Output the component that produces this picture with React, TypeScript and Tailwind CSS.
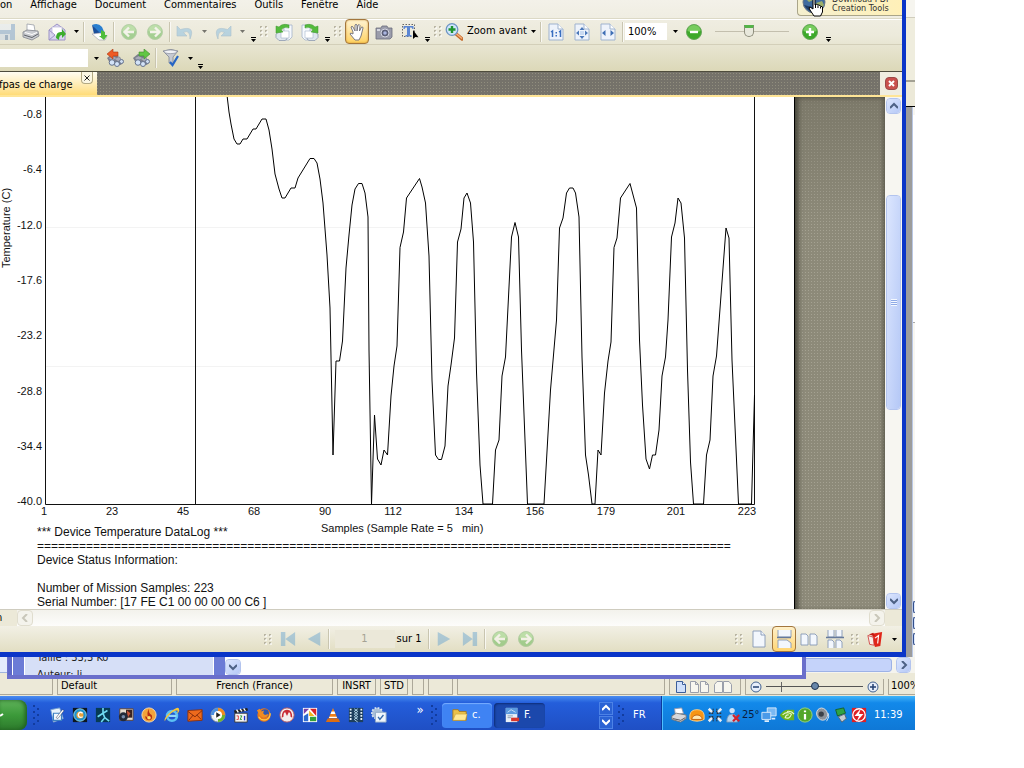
import React from 'react';

type Kids = { children?: React.ReactNode };

const yTicks = ['-0.8', '-6.4', '-12.0', '-17.6', '-23.2', '-28.8', '-34.4', '-40.0'];
const xTicks: [number, string][] = [
    [44, '1'], [112, '23'], [183, '45'], [254, '68'], [325, '90'], [393, '112'],
    [464, '134'], [535, '156'], [606, '179'], [676, '201'], [747, '223'],
];

const curve =
    '227,95 229,112 231,124 234,139 237,144 240,144 243,139 247,139 253,129 256,129 262,119 266,119 269,130 272,149 275,174 279,189 282,198 285,198 291,188 295,188 298,178 310,158.5 314,158.5 317,163 320,179 323,203 327,255 330,308 333,455 336,361 339.5,361 342.5,341 346,268 349,235 352,205 355,189 358.5,183.5 362,183.5 365,193 368,217 369,350 371.5,504 374.5,415 377.5,459 381,465 384,450 387.5,455 391,396 394,366 397,346 400,247.5 403.5,232 406.5,198 419.5,178.5 422,187 425.5,203 429,256 431.5,360 432,380 435.5,455 438.5,459.5 441.5,459.5 445,446 448,386 451,365 454.5,338 457.5,242 461,229 464,198 467,193 470.5,203 473.5,242 476.5,372 480,465 483,504 492.5,504 495.5,450 499,440 502,376 505.5,357 511.5,237 515,222.5 518.5,237 521.5,350 527.5,504 544,504 550.5,390 556.5,320 559.5,228 563,218 566.5,193 569.5,188 573,188 575.5,193 579,217 582,357 585.5,455 588.5,475 592,504 595,504 598,450 601,455 604.5,393 608,361 611,342 614,247.5 617,238 620.5,198 630,183.5 636.5,208 639.5,340 642.5,405 646,459 649.5,469 652.5,455 655.5,455 659,430 662,376 665.5,357 668,320 671.5,237 675,223 678,198 681,203 684.5,238 687.5,370 690.5,462 693.5,504 703.5,504 706.5,455 710,440 713,376 716.5,356 726,228 729,238 732,360 738.5,504 751.5,504 754.5,395';

const Tool: React.FC<Kids & { label: string }> = ({ label, children }) => (
    <button aria-label={label} className="flex w-[26px] shrink-0 items-center justify-center">
        {children}
    </button>
);

const Ico: React.FC<Kids & { size?: number; dim?: boolean }> = ({ size = 18, dim, children }) => (
    <svg width={size} height={size} viewBox="0 0 18 18" fill="none" className={dim ? 'shrink-0 opacity-40' : 'shrink-0'}>
        {children}
    </svg>
);

const Caret = ({ dim = false }) => (
    <svg width="5" height="3" viewBox="0 0 5 3" className={dim ? 'shrink-0 opacity-50' : 'shrink-0'}>
        <path d="M0 0h5L2.5 3z" fill="#000" />
    </svg>
);

const CaretButton = ({ label = 'Options', dim = false }) => (
    <button aria-label={label} className="flex w-3 shrink-0 items-center justify-center">
        <Caret dim={dim} />
    </button>
);

const More = () => (
    <button aria-label="Plus d'outils" className="flex w-2 shrink-0 items-end justify-center pb-0.5">
        <svg width="5" height="5" viewBox="0 0 5 5"><path d="M0 0h5v1H0zM0 2h5L2.5 5z" fill="#000" /></svg>
    </button>
);

const Sep = () => <div className="mx-px h-5 w-0.5 shrink-0 self-center border-l border-[#c9c5b0] bg-white/70" />;

const Grip = () => (
    <div className="flex w-3.5 shrink-0 items-center justify-center">
        <svg width="8" height="11" viewBox="0 0 8 11">
            <path d="M0 0h2v2H0zM5 0h2v2H5zM0 4h2v2H0zM5 4h2v2H5zM0 8h2v2H0zM5 8h2v2H5z" fill="#b9b5a3" />
            <path d="M1 1h2v2H1zM6 1h2v2H6zM1 5h2v2H1zM6 5h2v2H6zM1 9h2v2H1zM6 9h2v2H6z" fill="#fff" opacity=".6" />
        </svg>
    </div>
);

const Ball: React.FC<{ d: string; dim?: boolean }> = ({ d, dim }) => (
    <Ico dim={dim}>
        <circle cx="9" cy="9" r="7.500" fill="#3da92a" stroke="#69a85c" />
        <path d="M2.500 8a6.500 6 0 0 1 13 0q-6.500 3-13 0z" fill="#86d46c" opacity=".8" />
        <path d={d} stroke="#fff" strokeWidth="2.400" />
    </Ico>
);

const leftArrow = 'M14 9H5M9 4.500L4.500 9 9 13.500';
const rightArrow = 'M4 9h9M9 4.500L13.500 9 9 13.500';

const DocIcon: React.FC<Kids> = ({ children }) => (
    <Ico>
        <path d="M2 1h9l5 5v11H2z" fill="#eef3fb" stroke="#9fb3cf" />
        <path d="M11 1v5h5" fill="#fff" stroke="#9fb3cf" />
        {children}
    </Ico>
);

const PageCopy = ({ flip = false }) => (
    <Ico>
        <g transform={flip ? 'matrix(-1 0 0 1 18 0)' : undefined}>
            <path d="M9 2h8v12l-3 3H9z" fill="#f6f9fd" stroke="#a3b3c9" strokeWidth=".8" />
            <path d="M1 11l3-2h8v7l-2 1.500H4l-3-3z" fill="#dfe6ee" stroke="#8e9bb0" strokeWidth=".8" />
            <path d="M6 8h8v7H6z" fill="#fff" stroke="#a3b3c9" strokeWidth=".6" />
            <path d="M14 2Q7 0 4 4L1 3v7l7-1-2-2q3-4 8-2z" fill="#54bb3c" stroke="#3f962e" strokeWidth=".5" />
        </g>
    </Ico>
);

const Binoc = ({ next = false }) => (
    <Ico>
        <path d="M1 9l5-4 8 3 3 5-2 3-5-1-6-1z" fill="#7d7f8c" />
        <path d="M3 9l4-2 3 2-4 3zM9 10l4-2 3 3-4 1z" fill="#a9abb8" />
        <circle cx="6" cy="13.500" r="2.800" fill="#d3e3f8" stroke="#67748d" />
        <circle cx="11" cy="15" r="2.500" fill="#d3e3f8" stroke="#67748d" />
        <circle cx="15.500" cy="12.500" r="2" fill="#cddcf0" stroke="#67748d" />
        {next ? (
            <path d="M7 3h5V0l6 5-6 5V7H7z" fill="#62c644" stroke="#3f8a2b" strokeWidth=".6" />
        ) : (
            <path d="M12 3H7V0L1 5l6 5V7h5z" fill="#ef5a24" stroke="#a83b14" strokeWidth=".6" />
        )}
    </Ico>
);

const Chevron: React.FC<{ d: string; color?: string }> = ({ d, color = '#4d6185' }) => (
    <svg width="8" height="8" viewBox="0 0 8 8" fill="none"><path d={d} stroke={color} strokeWidth="2" /></svg>
);

const UP = 'M0 6l4-4 4 4';
const DOWN = 'M0 2l4 4 4-4';
const RIGHT = 'M2 0l4 4-4 4';
const LEFT = 'M6 0L2 4l4 4';

const scrollBtn =
    'flex shrink-0 items-center justify-center rounded-sm border border-white bg-gradient-to-br from-[#dce6fe] to-[#b5c8f6] outline -outline-offset-1 outline-[#b3c4ee]';
const dimScrollBtn =
    'flex size-4 shrink-0 items-center justify-center rounded-sm border border-[#e0ddce] bg-[#f4f3ec]';
const range = 'cursor-pointer appearance-none bg-transparent';

function MenuBar() {
    return (
        <div className="flex h-[18px] items-end overflow-hidden">
            <nav className="flex gap-[18px] pb-1.5 leading-[14px] text-black" aria-label="Menu">
                {['on', 'Affichage', 'Document', 'Commentaires', 'Outils', 'Fenêtre', 'Aide'].map((m) => (
                    <button key={m}>{m}</button>
                ))}
            </nav>
            <button className="relative mb-0.5 ml-auto flex w-[105px] shrink-0 items-end rounded-bl border-b border-l border-[#aaa589] bg-gradient-to-r from-[#f5f0cf] to-[#fff0b8] pb-px pl-1 text-left text-[9px] leading-[9px] text-[#333]">
                <svg width="24" height="24" viewBox="0 0 24 24">
                    <circle cx="12" cy="12" r="11" fill="#3f6b9e" stroke="#6b7787" />
                    <path d="M3 8q4-6 9-5l1 6-6 3zM14 13l6-2 2 4-5 6z" fill="#9db06a" />
                    <path d="M2 15q4 7 10 7l-2-5z" fill="#1f3c66" />
                </svg>
                <span className="ml-1.5 whitespace-nowrap pb-px">Download PDF<br />Creation Tools</span>
                <svg className="absolute bottom-[-2px] left-2.5" width="16" height="20" viewBox="0 0 16 20">
                    <path d="M5 1q1.500-1 2 1v6l1-1 2 1 1 0 1.500 1 2 1v5l-2 4H6l-4-6q-2-3 0-3l3 2z" fill="#fff" stroke="#000" />
                    <path d="M7.500 8v3M10 8.500v2.500M12.500 9.500v2" stroke="#000" />
                </svg>
            </button>
        </div>
    );
}

function MainToolbar() {
    return (
        <div className="flex h-[27px] items-stretch border-y border-t-[#dcd9c6] border-b-[#d3cfb9] shadow-[inset_0_1px_0_#fff]">
            <button aria-label="Enregistrer" className="flex w-[18px] shrink-0 items-center overflow-hidden">
                <svg width="16" height="18" viewBox="0 0 16 18" opacity=".6">
                    <path d="M0 1h15v16H0z" fill="#8faed0" />
                    <path d="M0 1h11v6H0z" fill="#e8eef5" /><path d="M0 11h10v6H0z" fill="#cfdae6" /><path d="M5 12h3v5H5z" fill="#708db0" />
                </svg>
            </button>
            <Tool label="Imprimer">
                <Ico>
                    <path d="M5 1l7 1 1 6-8 2z" fill="#fff" stroke="#9aa0a8" strokeWidth=".8" />
                    <path d="M1 9l4-2 11 1 1 5-7 4-9-3z" fill="#c9cbd0" stroke="#80848b" strokeWidth=".8" />
                    <path d="M2 12l8 2.500 6-3.500" stroke="#5e6269" />
                    <path d="M3 9.500l7 2 5-2" stroke="#fff" />
                </Ico>
            </Tool>
            <Tool label="Envoyer">
                <Ico>
                    <path d="M1 7l8-6 8 6v10H1z" fill="#d9d5ef" stroke="#9b92c6" />
                    <path d="M4 4h10v7l-5 3-5-3z" fill="#fff" stroke="#b9b6da" strokeWidth=".7" />
                    <path d="M1 17l6-5M1 7l6 5" stroke="#9b92c6" />
                    <path d="M8 15q0-7 6-6V6l4 5-4 4v-3q-3 0-3 5z" fill="#3cae2d" />
                </Ico>
            </Tool>
            <CaretButton />
            <Sep />
            <Tool label="Reader">
                <Ico>
                    <path d="M2 2q6-3 10 2l3 7-7-1z" fill="#2a7fd0" />
                    <path d="M2 2l8 8-6 1z" fill="#1c4f9a" />
                    <path d="M2 11l8-1 7 3-2 4H9z" fill="#fff" stroke="#99a" strokeWidth=".6" />
                    <path d="M11 7l4 2v3h2.500L14 17l-5-4h2z" fill="#4fbd3a" />
                </Ico>
            </Tool>
            <Sep />
            <Tool label="Précédent"><Ball d={leftArrow} dim /></Tool>
            <Tool label="Suivant"><Ball d={rightArrow} dim /></Tool>
            <Sep />
            <Tool label="Annuler"><Ico dim><path d="M1 3v10h10L7.500 9.500Q14 6 14 16 20 2 4.500 6.500z" fill="#6bb0e2" stroke="#4f87b8" strokeWidth=".6" /></Ico></Tool>
            <CaretButton dim />
            <Tool label="Rétablir"><Ico dim><path d="M17 3v10H7l3.500-3.500Q4 6 4 16-2 2 13.500 6.500z" fill="#6bb0e2" stroke="#4f87b8" strokeWidth=".6" /></Ico></Tool>
            <CaretButton dim />
            <div className="ml-px flex"><More /></div>
            <Grip />
            <Tool label="Pivoter à gauche"><PageCopy /></Tool>
            <Tool label="Pivoter à droite"><PageCopy flip /></Tool>
            <More />
            <Grip />
            <button aria-label="Main" className="mr-0.5 flex w-6 shrink-0 items-center justify-center rounded-sm border border-[#a3763d] bg-gradient-to-b from-[#fff3d0] to-[#ffd25e] shadow-[inset_0_0_2px_#c78a2b]">
                <Ico>
                    <path d="M5 9L3 4q1-1.500 2 0l2 4V2q1-1.500 2 0v6l1-6q1.500-1 2 .5L11.500 8l2-4q1.500-.5 1.500 1l-2 8-2 4H7l-5-6q0-2 3 0z" fill="#fff" stroke="#6c6c78" strokeWidth=".9" />
                </Ico>
            </button>
            <Tool label="Instantané">
                <Ico>
                    <path d="M1 5l5 0 1-2h5l1 2h4v9l-2 2H1z" fill="#9a9cab" stroke="#6a6d7c" strokeWidth=".8" />
                    <circle cx="10" cy="10" r="4" fill="#5b5f78" stroke="#d4d6e2" /><circle cx="10" cy="10" r="1.800" fill="#aab5e0" />
                    <path d="M2 6h3v2H2z" fill="#d5d7e0" />
                </Ico>
            </Tool>
            <Tool label="Sélection de texte">
                <Ico>
                    <path d="M1.500 1.500h12v12h-12z" stroke="#666" strokeDasharray="1.500 1.500" />
                    <path d="M2.500 3h10v3h-1l-1-1.500H9V12h1.500v1.500h-6V12H6V4.500H4.500l-1 1.500h-1z" fill="#5b86d3" />
                    <path d="M12 7v9l2.300-2 3.200.3z" fill="#000" />
                </Ico>
            </Tool>
            <More />
            <Grip />
            <button className="flex w-[82px] shrink-0 items-center gap-1 whitespace-nowrap">
                <Ico>
                    <path d="M10 10l7 6" stroke="#c56a2b" strokeWidth="3.500" strokeLinecap="round" /><path d="M11 10.500l6 5" stroke="#f7b27c" strokeWidth="1.500" />
                    <circle cx="7" cy="6.500" r="5.800" fill="#cfe6fb" stroke="#6e94c4" strokeWidth="1.300" />
                    <path d="M7 3v7M3.500 6.500h7" stroke="#1f9431" strokeWidth="2.400" />
                </Ico>
                Zoom avant
            </button>
            <CaretButton />
            <Sep />
            <Tool label="Taille réelle"><DocIcon><path d="M4 9l1.500-1v6M12 9l1.500-1v6" stroke="#3a6fc0" strokeWidth="1.500" /><path d="M8.500 9h1.500v1.500H8.500zM8.500 12h1.500v1.500H8.500z" fill="#3a6fc0" /></DocIcon></Tool>
            <Tool label="Page entière"><DocIcon><path d="M9 4l2.500 3h-5zM9 16l2.500-3h-5zM3 10l3-2.500v5zM15 10l-3-2.500v5z" fill="#4c79bb" /><path d="M7 8h4v4H7z" fill="#c9daf2" /></DocIcon></Tool>
            <Tool label="Pleine largeur"><DocIcon><path d="M3 10l3.500-3v6zM15 10l-3.500-3v6z" fill="#3f6fb5" /></DocIcon></Tool>
            <Sep />
            <input aria-label="Zoom" defaultValue="100%" className="my-1 mr-0.5 w-[42px] shrink-0 bg-white pt-px pl-[3px]" />
            <CaretButton />
            <Tool label="Zoom arrière"><Ball d="M5 9h8" /></Tool>
            <input
                type="range"
                aria-label="Niveau de zoom"
                defaultValue={46}
                className={`${range} mx-2 w-[74px] shrink-0 [&::-webkit-slider-runnable-track]:h-px [&::-webkit-slider-runnable-track]:bg-[#c3bfae] [&::-webkit-slider-thumb]:-mt-1.5 [&::-webkit-slider-thumb]:h-3 [&::-webkit-slider-thumb]:w-2.5 [&::-webkit-slider-thumb]:appearance-none [&::-webkit-slider-thumb]:rounded-b-full [&::-webkit-slider-thumb]:border [&::-webkit-slider-thumb]:border-t-[3px] [&::-webkit-slider-thumb]:border-[#8d8d7c] [&::-webkit-slider-thumb]:border-t-[#54b348] [&::-webkit-slider-thumb]:bg-[#e8e8dc]`}
            />
            <Tool label="Zoom avant plus"><Ball d="M5 9h8M9 5v8" /></Tool>
            <div className="ml-px flex"><More /></div>
        </div>
    );
}

function SearchBar() {
    return (
        <div className="flex h-[26px] items-stretch">
            <input aria-label="Rechercher" className="my-1 w-[88px] shrink-0 bg-white" />
            <div className="ml-0.5 flex"><CaretButton /></div>
            <Tool label="Occurrence précédente"><Binoc /></Tool>
            <Tool label="Occurrence suivante"><Binoc next /></Tool>
            <Sep />
            <Tool label="Filtre">
                <Ico>
                    <path d="M1 2q8-3 15 0l-5 6v8l-4-2V8z" fill="#c5c9d2" stroke="#7f8594" strokeWidth=".8" />
                    <ellipse cx="8.500" cy="2.800" rx="6.500" ry="1.800" fill="#f1f2f6" stroke="#7f8594" strokeWidth=".6" />
                    <path d="M8 13l2.500 3L16 7" stroke="#2766c4" strokeWidth="2.200" />
                </Ico>
            </Tool>
            <CaretButton />
            <More />
        </div>
    );
}

function Chart() {
    return (
        <svg viewBox="0 97 794 428" className="block w-full overflow-visible font-['Liberation_Sans',Arial,sans-serif]" fontSize="11" fill="#111" role="img" aria-label="Temperature (C)">
            <path d="M46 227.500h708M46 366.500h708" stroke="#f3f3f3" />
            <path d="M45.500 97v407.500h709V97M195.500 97v407" fill="none" stroke="#111" />
            <polyline points={curve} fill="none" stroke="#000" />
            {yTicks.map((t, i) => (
                <text key={t} x="42" y={118 + Math.round(i * 55.3)} textAnchor="end">{t}</text>
            ))}
            {xTicks.map(([x, t]) => (
                <text key={t} x={x} y="515" textAnchor="middle">{t}</text>
            ))}
            <text x="321" y="532" className="whitespace-pre">{'Samples (Sample Rate = 5   min)'}</text>
            <text transform="translate(10 228) rotate(-90)" textAnchor="middle">Temperature (C)</text>
        </svg>
    );
}

function Viewport() {
    const report = ['*** Device Temperature DataLog ***', '='.repeat(99), 'Device Status Information:', '', 'Number of Mission Samples: 223', 'Serial Number: [17 FE C1 00 00 00 00 C6 ]'];
    return (
        <div className="flex overflow-hidden bg-[#8f8c7b]">
            <main className="min-w-0 flex-1 bg-white">
                <Chart />
                <div className="pl-[37px] font-['Liberation_Sans',Arial,sans-serif] text-[12px] leading-[14px] text-[#111]">
                    {report.map((line, i) => (
                        <p key={i} className="h-3.5 whitespace-nowrap">{line}</p>
                    ))}
                </div>
            </main>
            <div className="w-[91px] shrink-0 border-l border-black bg-[#8d8a79] bg-[linear-gradient(to_bottom,#6b685a80,transparent_25%),radial-gradient(#a5a292_25%,transparent_26%)] bg-[length:100%_100%,3px_3px] shadow-[inset_5px_0_5px_-2px_#45443a,inset_-4px_3px_4px_-2px_#5d5a4d]" />
            <div className="flex w-[17px] shrink-0 flex-col bg-[#f7f6f1] px-px pt-px">
                <button aria-label="Défiler vers le haut" className={`${scrollBtn} h-4`}><Chevron d={UP} /></button>
                <div className="flex-[82]" />
                <div className={`${scrollBtn} flex-[214]`}>
                    <div className="h-[7px] w-1.5 bg-[repeating-linear-gradient(#f4f8ff_0_1px,#8faae6_1px_2px)]" />
                </div>
                <div className="flex-[184]" />
                <button aria-label="Défiler vers le bas" className={`${scrollBtn} h-4`}><Chevron d={DOWN} /></button>
            </div>
        </div>
    );
}

const NavArrow: React.FC<{ d: string }> = ({ d }) => (
    <Ico dim size={16}><path d={d} fill="#4f97cf" /></Ico>
);

const pg = { fill: '#f3f7fd', stroke: '#8797b5', strokeWidth: 0.9 };

function NavBar() {
    return (
        <div className="flex h-[26px] items-stretch bg-gradient-to-b from-[#f2f0e5] to-[#e2dec3]">
            <div className="flex min-w-0 flex-1 justify-end">
                <Grip />
                <Tool label="Première page"><NavArrow d="M1 1h5v16H1zM17 1v16L6 9z" /></Tool>
                <Tool label="Page précédente"><NavArrow d="M16 1v16L2 9z" /></Tool>
                <Sep />
                <input aria-label="Page" defaultValue="1" disabled className="my-1 ml-1 w-[60px] shrink-0 bg-[#ebe8d9] pt-px text-center text-[#a5a294]" />
                <label className="mr-1 ml-0.5 flex w-[26px] shrink-0 items-center whitespace-nowrap pt-px">sur 1</label>
                <Sep />
                <Tool label="Page suivante"><NavArrow d="M2 1v16l14-8z" /></Tool>
                <Tool label="Dernière page"><NavArrow d="M12 1h5v16h-5zM1 1v16l11-8z" /></Tool>
                <Sep />
                <Tool label="Vue précédente"><Ball d={leftArrow} dim /></Tool>
                <Tool label="Vue suivante"><Ball d={rightArrow} dim /></Tool>
            </div>
            <div className="flex flex-[0_0_40.3%] justify-end">
                <Grip />
                <Tool label="Une page"><Ico><path d="M3 1h8l4 4v12H3z" {...pg} /><path d="M11 1v4h4" {...pg} /></Ico></Tool>
                <button aria-label="Continu" className="flex w-6 shrink-0 items-center justify-center rounded-sm border border-[#a3763d] bg-gradient-to-b from-[#fff0c8] to-[#ffd572]">
                    <Ico><path d="M3 0v7h13V0M3 18v-8h9l4 3v5" {...pg} /><path d="M2 7.500h14" stroke="#667a9c" strokeWidth="1.500" /></Ico>
                </button>
                <Tool label="Deux pages"><Ico><path d="M1 4h5l2 2v9H1zM10 4h5l2 2v9h-7z" {...pg} /></Ico></Tool>
                <Tool label="Deux pages continues"><Ico><path d="M2 0v7h6V0M10 0v7h6V0M2 18v-8h4l2 2v6M10 18v-8h4l2 2v6" {...pg} /><path d="M0 7.500h18" stroke="#667a9c" strokeWidth="1.500" /></Ico></Tool>
                <Grip />
                <Tool label="PDF"><Ico size={16}><path d="M6 3l11-2-2 16-6 1-2-5z" fill="#e02619" /><path d="M1 5l6 2 1 9-5-1z" fill="#f6efe9" stroke="#c33" strokeWidth=".9" /><path d="M2 4l5-2 2 4z" fill="#c21a12" /><path d="M9 8l4-3-1 9" stroke="#fff" strokeWidth="1.300" /></Ico></Tool>
                <CaretButton />
                <div className="w-0.5" />
            </div>
        </div>
    );
}

function PdfWindow() {
    return (
        <section className="relative z-10 mr-[9px] overflow-hidden border-r-4 border-b-[5px] border-[#0a35c8] bg-[#ece9d8]">
            <div className="bg-gradient-to-b from-[#f3f1e9] via-[#eceadb] to-[#dcd8b8]">
                <MenuBar />
                <MainToolbar />
                <SearchBar />
            </div>
            <div className="flex h-6 items-stretch border-t border-[#4e4c3c] bg-[#75726a] bg-[radial-gradient(#918e7e_25%,transparent_26%)] bg-[length:3px_3px]">
                <div className="flex w-[97px] items-start bg-gradient-to-b from-[#fffdf2] to-[#ffdc78]">
                    <span className="-ml-px flex-1 whitespace-nowrap leading-[26px]">fpas de charge</span>
                    <button aria-label="Fermer l'onglet" className="mr-1 flex size-3 shrink-0 items-center justify-center rounded-b-sm border border-t-0 border-[#b3a983] bg-[#fbf7e4]">
                        <svg width="6" height="6" viewBox="0 0 6 6"><path d="M.5.5l5 5M5.500.5l-5 5" stroke="#222" /></svg>
                    </button>
                </div>
                <div className="ml-auto flex w-[22px] items-center justify-center bg-[#f0ede0]">
                    <button aria-label="Fermer" className="flex size-[13px] items-center justify-center rounded-sm border border-[#9a4a48] bg-[#c9504d]">
                        <svg width="7" height="7" viewBox="0 0 7 7"><path d="M1 1l5 5M6 1L1 6" stroke="#fff" strokeWidth="2" /></svg>
                    </button>
                </div>
            </div>
            <div className="h-0.5 bg-[#ffe596]" />
            <Viewport />
            <div className="flex h-[17px] items-center border-t border-[#cfccbf] bg-gradient-to-b from-[#f3f2ec] to-[#fdfdfb]">
                <div className="flex w-[17px] items-center self-stretch bg-[#ece9d8]"><span className="-ml-1">n</span></div>
                <button aria-label="Défiler vers la gauche" className={dimScrollBtn}><Chevron d={LEFT} color="#c9c7ba" /></button>
                <div className="flex-1" />
                <button aria-label="Défiler vers la droite" className={dimScrollBtn}><Chevron d={RIGHT} color="#c9c7ba" /></button>
                <div className="w-[17px] self-stretch bg-[#ece9d8]" />
            </div>
            <NavBar />
        </section>
    );
}

// Slice of the window that sits behind, seen along the right edge
function BackWindowEdge() {
    return (
        <div className="absolute inset-y-0 right-0 flex w-[9px] flex-col bg-[#f4f2e8]">
            <div className="h-[18px] border-b border-[#d0cdbd] bg-[#f6f5ef]" />
            <div className="h-16 border-b-2 border-[#a3a193] bg-[#efedde]" />
            <div className="h-[25px] border-b border-black bg-[#ece9d8]" />
            <div className="flex flex-1">
                <div className="w-1.5 bg-[#9c9c9c]" />
                <div className="flex flex-1 flex-col gap-1 border-l border-[#b9c7e4] bg-[#f8f7f2]">
                    <div className="mt-2 h-52 border-b border-[#a9a9a9] bg-white" />
                    <div className="flex-1" />
                    <div className="h-3 rounded-l border border-r-0 border-[#33508c] bg-[#dfe8fb]" />
                    <div className="h-3 rounded-l border border-r-0 border-[#33508c] bg-[#dfe8fb]" />
                    <div className="mb-3 h-3 rounded-l border border-r-0 border-[#33508c] bg-[#dfe8fb]" />
                </div>
            </div>
        </div>
    );
}

function ExplorerStrip() {
    return (
        <div className="flex h-[22px] bg-[#ece9d8]">
            <div className="h-4 w-[7px] shrink-0 border-b border-[#9fb4de] bg-[#e3ebfc]" />
            <div className="flex min-w-0 flex-1 overflow-hidden border-r-4 border-b-4 border-l border-[#6a6fcb]">
                <div className="w-4 shrink-0 border-l-4 border-[#5d68c8] bg-[#6b7bd6] shadow-[inset_1px_0_0_#fff]" />
                <div className="w-[190px] shrink-0 overflow-hidden border-x border-white bg-[#d6dff7] pl-3 text-[#222]">
                    <p className="-mt-2 leading-[17px]">Taille : 33,3 Ko</p>
                    <p className="leading-[17px]">Auteur: li</p>
                </div>
                <div className="w-[11px] shrink-0 bg-[#6b7bd6]" />
                <div className="flex-1 bg-white">
                    <button aria-label="Défiler" className={`${scrollBtn} mt-0.5 size-4`}><Chevron d={DOWN} /></button>
                </div>
            </div>
            <div className="flex h-4 w-[109px] shrink-0 items-center bg-[#f5f4ee]">
                <div className="h-3.5 flex-1 rounded-r-sm border border-l-0 border-[#9db2e6] bg-[#c5d3fa]" />
                <button aria-label="Défiler vers la droite" className={`${scrollBtn} mx-1 h-4 w-[15px]`}><Chevron d={RIGHT} /></button>
            </div>
        </div>
    );
}

const cell = 'flex shrink-0 items-center whitespace-nowrap border-x border-b border-[#aca899] h-4';

function StatusBar() {
    return (
        <footer className="flex h-[17px] items-start gap-1 overflow-hidden bg-[#ece9d8]">
            <div className={`${cell} w-[53px] border-l-0`} />
            <div className={`${cell} w-[115px] pl-[3px]`}>Default</div>
            <div className={`${cell} w-[157px] justify-center`}>French (France)</div>
            <div className={`${cell} w-[39px] justify-center`}>INSRT</div>
            <div className={`${cell} w-7 justify-center`}>STD</div>
            <div className={`${cell} w-3`} />
            <div className={`${cell} w-[25px]`} />
            <div className="h-4 min-w-0 flex-1 border-x border-b border-[#aca899]" />
            <div className={`${cell} w-[72px] gap-1 pl-1.5`}>
                <svg width="10" height="12" viewBox="0 0 10 12"><path d="M.5.5h6l3 3v8h-9z" fill="#cfe0fb" stroke="#3b5e9a" /><path d="M6.500.5v3h3" stroke="#3b5e9a" fill="#fff" /></svg>
                <svg width="20" height="12" viewBox="0 0 20 12"><path d="M.5.5h5l3 3v8h-8zM10.500.5h5l3 3v8h-8zM5.500.5v3h3M15.500.5v3h3" fill="#f7f6ef" stroke="#9a9fab" /></svg>
                <svg width="18" height="12" viewBox="0 0 18 12"><path d="M3 .5h5.500v11h-8v-8zM9.500.5H15l2.500 3v8h-8z" fill="#f7f6ef" stroke="#9a9fab" /></svg>
            </div>
            <div className={`${cell} w-[139px] gap-1 px-1`}>
                <svg width="12" height="12" viewBox="0 0 12 12"><circle cx="6" cy="6" r="5" fill="#e7eefb" stroke="#43628f" /><path d="M3 6h6" stroke="#223f70" strokeWidth="1.500" /></svg>
                <input
                    type="range"
                    aria-label="Zoom du document"
                    defaultValue={50}
                    className={`${range} h-3 min-w-0 flex-1 bg-[linear-gradient(#666,#666)] bg-[length:1px_10px] bg-[position:16%_center] bg-no-repeat [&::-webkit-slider-runnable-track]:h-px [&::-webkit-slider-runnable-track]:bg-[#555] [&::-webkit-slider-thumb]:-mt-1 [&::-webkit-slider-thumb]:size-2 [&::-webkit-slider-thumb]:appearance-none [&::-webkit-slider-thumb]:rounded-full [&::-webkit-slider-thumb]:border [&::-webkit-slider-thumb]:border-[#20344f] [&::-webkit-slider-thumb]:bg-[#6887aa]`}
                />
                <svg width="12" height="12" viewBox="0 0 12 12"><circle cx="6" cy="6" r="5" fill="#e7eefb" stroke="#43628f" /><path d="M3 6h6M6 3v6" stroke="#223f70" strokeWidth="1.500" /></svg>
            </div>
            <div className={`${cell} w-[27px] overflow-hidden border-r-0 pl-0.5`}>100%</div>
        </footer>
    );
}

const launchers: [string, React.ReactNode][] = [
    ['Bureau', <><path d="M2 3l10-2 4 12-11 4z" fill="#e9f3fc" stroke="#7aa3cf" /><path d="M5 7h9v8H5z" fill="#f4f9ff" stroke="#3d80c4" strokeWidth="1.300" /><path d="M8 12l7-9 2 1-7 9z" fill="#fff" stroke="#346" strokeWidth=".6" /></>],
    ['Recherche', <><path d="M1 1h16v16H1z" fill="#0c1720" /><circle cx="9" cy="9" r="7" fill="#1e93cf" stroke="#9fdcf6" /><circle cx="9" cy="9" r="4" fill="#e9a13a" /><path d="M12 7q-4-3-5 2 1 4 5 2" stroke="#fff" strokeWidth="1.500" /></>],
    ['Réseau', <><path d="M1 1h16v16H1z" fill="#063b54" /><path d="M9 1v6l-6 4M9 7l5-3M9 7l2 5-4 5M11 12l5 4" stroke="#6fdcf2" strokeWidth="1.800" /></>],
    ['Photo', <><path d="M2 2h15v13H2z" fill="#e6ddd0" stroke="#5c4030" /><path d="M9 3h7v9H9z" fill="#3a2320" /><path d="M10 4l4 3-3 5z" fill="#c8573a" /><circle cx="6" cy="11" r="5" fill="#222a38" /><circle cx="6" cy="11" r="2" fill="#778cab" /></>],
    ['Graveur', <><circle cx="9" cy="9" r="8" fill="#f3a33a" stroke="#ffe0aa" /><path d="M9 2q-1 5 3 7 2 5-3 6-5-1-4-5l3 2Q6 7 9 2z" fill="#b82f13" /><circle cx="9" cy="12" r="2" fill="#ffe36a" /></>],
    ['Internet Explorer', <><circle cx="9" cy="10" r="5.500" stroke="#5cc1f4" strokeWidth="3" /><path d="M5 10h9" stroke="#8ed6fa" strokeWidth="2.500" /><path d="M1 16Q-1 12 8 5t9-2q1 2-3 5 2-4 1-4-3-1-8 4t-6 8z" fill="#f5c63c" /></>],
    ['Courrier', <><path d="M1 4l16-1v12l-16 1z" fill="#ee6a1c" stroke="#8d300b" /><path d="M1 5l8 6 8-7M2 15l5-6M16 14l-5-5" stroke="#7c270a" /></>],
    ['Lecteur', <><circle cx="9" cy="9" r="8" fill="#e9eef4" stroke="#7c8896" /><path d="M9 1a8 8 0 0 1 8 8h-4L9 5z" fill="#f28a1c" /><path d="M1 9a8 8 0 0 1 8-8v4L5 9z" fill="#4a8fe0" /><path d="M9 17a8 8 0 0 0 8-8h-4l-4 4z" fill="#70b52c" /><circle cx="9" cy="9" r="4.500" fill="#fff" /><path d="M7 6v6l5-3z" fill="#222" /></>],
    ['Vidéo', <><path d="M2 7h14v10H2z" fill="#f4f4f4" stroke="#333" /><path d="M1 4l15-3 1 3L2 7z" fill="#222" /><path d="M4 3l2 3M8 2l2 3M12 1.500l2 3" stroke="#fff" strokeWidth="1.500" /><path d="M4 10h2v4H4" stroke="#d33" /><path d="M8 10h2l-2 4h2" stroke="#293" /><path d="M13 10v5" stroke="#23c" strokeWidth="1.500" /></>],
    ['Firefox', <><circle cx="9" cy="9" r="7.500" fill="#e8761a" /><circle cx="10" cy="7" r="4.500" fill="#2d57b0" /><path d="M1 4l3-2 2 3 3-1-1 3 2 2 4-1q-1 4-5 4-5-1-6-5z" fill="#f08c22" /><path d="M3 11q3 5 9 3 4-2 4-7" stroke="#ffd24c" strokeWidth="1.300" /></>],
    ['Antivirus', <><circle cx="9" cy="9" r="8" fill="#f5eded" stroke="#bd5a5d" /><path d="M3 12q0-9 6-9t6 9l-2-1q0-5-2-5l-2 4-2-4q-2 0-2 5z" fill="#c82a35" /></>],
    ['Picasa', <><path d="M1 1h16v16H1z" fill="#fff" /><path d="M2 2h6L2 8z" fill="#7a3fa8" /><path d="M9 2h7v8z" fill="#d8232a" /><path d="M2 10l5-3v9H2z" fill="#2d6bd0" /><path d="M9 11h7v5H9z" fill="#33a13a" /><path d="M8 4l6 6H8z" fill="#f3b21b" /></>],
    ['VLC', <><path d="M9 1l5 12H4z" fill="#f08019" /><path d="M7.300 5h3.400l1 3H6.200zM5 11h8l.7 1.500H4.300z" fill="#fff" /><path d="M3 13h12l2 4H1z" fill="#dc6d12" /></>],
    ['Pellicule', <><path d="M1 1h16v16H1z" fill="#1d3f5e" /><path d="M3 2v14M15 2v14" stroke="#e6f1f8" strokeWidth="2" strokeDasharray="2 1.500" /><path d="M7 2l4 3-4 3 4 3-4 3 4 3M11 2L7 5l4 3-4 3 4 3" stroke="#b7dbee" /></>],
    ['Tâches', <><circle cx="7" cy="7" r="6" fill="#a9bfd8" stroke="#d5e1ef" strokeDasharray="2 1.500" strokeWidth="2" /><path d="M5 6h12v11H5z" fill="#eff5fb" stroke="#8da7c4" /><path d="M8 11l2 3 4-5" stroke="#3569aa" strokeWidth="1.500" /></>],
];

const trayLeft: [string, React.ReactNode][] = [
    ['Imprimante', <><path d="M4 2l8-1 2 6-9 2z" fill="#fff" stroke="#99a" /><path d="M1 10l5-3 11 2v4l-6 4-10-3z" fill="#d7d8dc" stroke="#777" /><path d="M2 13l9 2 5-3" stroke="#4a4a50" /></>],
    ['Messagerie', <><path d="M1 14V9q1-6 8-6t8 6v5q-8 4-16 0z" fill="#f79514" stroke="#ffd38a" /><path d="M3 14q1-5 6-5t6 5z" fill="#ffe6b0" stroke="#be5a06" /></>],
    ['Plein écran', <><path d="M2 2l4 4M16 2l-4 4M2 16l4-4M16 16l-4-4" stroke="#e9eef5" strokeWidth="3" /><path d="M2 7h5V2M16 7h-5V2M2 11h5v5M16 11h-5v5" stroke="#2b3440" strokeWidth="1.500" strokeDasharray="2 1" /></>],
    ['Messenger', <><circle cx="8" cy="4" r="3" fill="#cfe4f8" /><path d="M2 17q0-9 6-9t6 9z" fill="#b6d3ee" stroke="#6f95bb" /><path d="M9 9l7 7M16 9l-7 7" stroke="#d2222b" strokeWidth="2.500" /></>],
];

const trayRight: [string, React.ReactNode][] = [
    ['Connexion', <><path d="M7 1h10v9H7z" fill="#79b9f3" stroke="#dfeefc" /><path d="M1 6h10v8H1z" fill="#4a9ae8" stroke="#dfeefc" /><path d="M4 16h5M12 13h4" stroke="#dfeefc" strokeWidth="2" /></>],
    ['NVIDIA', <><path d="M1 9q4-6 9-6h7v12h-7q-6 0-9-6z" fill="#6db41f" /><path d="M4 9q4-5 10-1-2 6-7 4 1-4 4-3M9 5q5-1 8 3" stroke="#e9f7cf" strokeWidth="1.300" /></>],
    ['Information', <><circle cx="9" cy="9" r="8" fill="#52a62b" stroke="#9fd87c" /><path d="M9 4v2M9 8v6" stroke="#fff" strokeWidth="2.500" /></>],
    ['Volume', <><ellipse cx="8" cy="8" rx="6" ry="7" fill="#8d9299" stroke="#d7dade" transform="rotate(-25 8 8)" /><circle cx="7" cy="8" r="3" fill="#3b4048" /><path d="M15 7q2 4-2 9" stroke="#dfe7f2" /></>],
    ['Périphérique', <><path d="M3 3l9-2 2 6-9 3z" fill="#2fa344" stroke="#155f23" /><path d="M6 11l7-3 2 5-5 4z" fill="#c6ccd3" stroke="#5b6570" /></>],
    ['Alimentation', <><path d="M1 1h16v16H1z" fill="#dc1f26" /><circle cx="9" cy="9" r="7" stroke="#fff" strokeWidth="1.500" /><path d="M11 2L4 10h5l-3 7 8-9H9z" fill="#fff" /></>],
];

function TaskGrip() {
    return (
        <svg width="6" height="22" viewBox="0 0 6 22" className="shrink-0">
            <path d="M0 1h2v2H0zM4 4h2v2H4zM0 7h2v2H0zM4 10h2v2H4zM0 13h2v2H0zM4 16h2v2H4zM0 19h2v2H0z" fill="#123c9e" />
        </svg>
    );
}

const TrayIcons: React.FC<{ items: [string, React.ReactNode][] }> = ({ items }) => (
    <>
        {items.map(([name, art]) => (
            <button key={name} aria-label={name} className="flex w-[18px] shrink-0 justify-center"><Ico size={16}>{art}</Ico></button>
        ))}
    </>
);

function Taskbar() {
    return (
        <div className="flex h-[34px] items-stretch bg-gradient-to-b from-[#4a8df0] via-[#245edb] via-20% to-[#1f4fc4] text-white">
            <button aria-label="Démarrer" className="mt-1 w-[27px] shrink-0 rounded-r-lg bg-gradient-to-b from-[#5fb25a] via-[#3c9a3a] to-[#2d7a2c] shadow-[inset_-2px_0_4px_#1e5e1f]">
                <svg width="4" height="8" viewBox="0 0 4 8"><path d="M0 5l3-2" stroke="#fff" strokeWidth="2" /></svg>
            </button>
            <div className="flex min-w-0 flex-1 items-center pt-1">
                <div className="flex w-[18px] shrink-0 justify-center"><TaskGrip /></div>
                {launchers.map(([name, art]) => (
                    <button key={name} aria-label={name} className="flex w-[23px] shrink-0 justify-center"><Ico size={16}>{art}</Ico></button>
                ))}
                <button aria-label="Autres icônes" className="ml-6 w-3 shrink-0 self-start pt-1 text-[13px] leading-3">»</button>
                <div className="mx-1 flex w-2 shrink-0 justify-center"><TaskGrip /></div>
                <button className="flex h-[25px] w-[50px] shrink-0 items-center gap-1 rounded-sm bg-[#3f83f3] pl-2.5 shadow-[inset_0_1px_1px_#78adff]">
                    <Ico size={16}><path d="M1 3h6l1 2h8v10H1z" fill="#e9c04a" stroke="#a77a1c" /><path d="M4 8h13l-2 7H1z" fill="#ffe995" stroke="#c49a31" strokeWidth=".6" /></Ico>
                    c.
                </button>
                <button className="ml-0.5 flex h-[25px] w-[51px] shrink-0 items-center gap-1 rounded-sm bg-[#1b48ac] pl-2.5 shadow-[inset_1px_1px_2px_#0d2c78]">
                    <Ico size={16}><path d="M2 1h13v16H2z" fill="#e8eff8" /><path d="M2 1h13v7H2z" fill="#5b9adf" /><path d="M4 6l4-3 5 3" stroke="#cfe3f8" /><path d="M4 10h6M4 12h4" stroke="#89a" /><path d="M8 12h9v4H8z" fill="#d8352a" /></Ico>
                    F.
                </button>
                <div className="ml-auto flex w-3.5 shrink-0 flex-col gap-px">
                    <button aria-label="Monter" className="flex h-[13px] items-center justify-center border border-[#4c82e6] bg-[#2a62d4]"><Chevron d={UP} color="#fff" /></button>
                    <button aria-label="Descendre" className="flex h-[13px] items-center justify-center border border-[#4c82e6] bg-[#2a62d4]"><Chevron d={DOWN} color="#fff" /></button>
                </div>
                <div className="flex w-4 shrink-0 justify-center"><TaskGrip /></div>
                <button className="ml-1 w-7 shrink-0 text-left">FR</button>
            </div>
            <div className="flex w-[254px] shrink-0 items-center border-l border-[#0d3a9c] bg-gradient-to-b from-[#3fb4f8] via-[#1289ea] via-20% to-[#0f78d6] pt-1 pl-2 shadow-[inset_1px_0_0_#4fc0ff]">
                <TrayIcons items={trayLeft} />
                <span className="w-[18px] shrink-0 text-[#0b1c3c]">25°</span>
                <TrayIcons items={trayRight} />
                <time className="ml-1.5">11:39</time>
            </div>
        </div>
    );
}

export default function App() {
    return (
        <div className="min-h-screen bg-white font-['DejaVu_Sans_Condensed','Noto_Sans',sans-serif] text-[11px] text-black">
            <div className="mr-[109px] overflow-hidden">
                <div className="relative">
                    <BackWindowEdge />
                    <PdfWindow />
                </div>
                <ExplorerStrip />
                <StatusBar />
                <Taskbar />
            </div>
        </div>
    );
}
